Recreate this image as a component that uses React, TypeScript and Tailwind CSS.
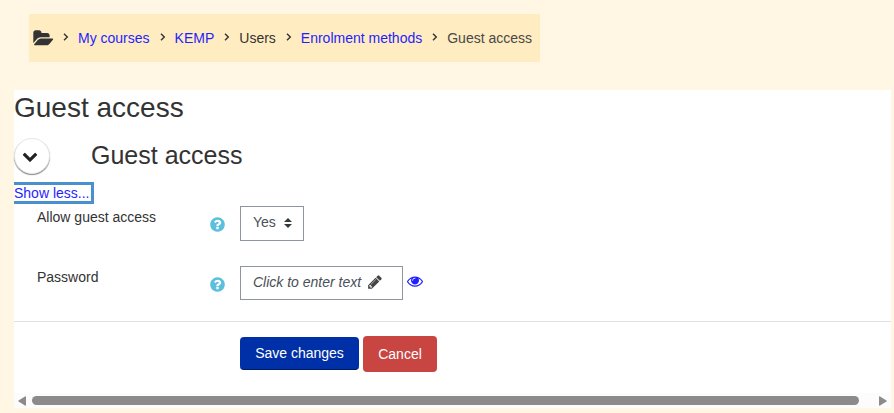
import { Fragment, type ReactNode } from "react";

const paths = {
  folderOpen:
    "M1815 952q0 31-31 66l-336 396q-43 51-120.5 86.5t-143.5 35.5h-1088q-34 0-60.5-13t-26.5-43q0-31 31-66l336-396q43-51 120.5-86.5t143.5-35.5h1088q34 0 60.5 13t26.5 43zm-343-344v160h-832q-94 0-197 47.5t-164 119.5l-337 396-5 6q0-4-.5-12.5t-.5-12.5v-960q0-92 66-158t158-66h320q92 0 158 66t66 158v32h544q92 0 158 66t66 158z",
  eye: "M1664 960q-152-236-381-353 61 104 61 225 0 185-131.5 316.5t-316.5 131.5-316.5-131.5-131.5-316.5q0-121 61-225-229 117-381 353 133 205 333.5 326.5t434.5 121.5 434.5-121.5 333.5-326.5zm-720-384q0-20-14-34t-34-14q-125 0-214.5 89.5t-89.5 214.5q0 20 14 34t34 14 34-14 14-34q0-86 61-147t147-61q20 0 34-14t14-34zm848 384q0 34-20 69-140 230-376.5 368.5t-499.5 138.5-499.5-139-376.5-368q-20-35-20-69t20-69q140-229 376.5-368t499.5-139 499.5 139 376.5 368q20 35 20 69z",
  pencil:
    "M491 1536l91-91-235-235-91 91v107h128v128h107zm523-928q0-22-22-22-10 0-17 7l-542 542q-7 7-7 17 0 22 22 22 10 0 17-7l542-542q7-7 7-17zm-54-192l416 416-832 832h-416v-416zm683 96q0 53-37 90l-166 166-416-416 166-165q36-38 90-38 53 0 91 38l235 234q37 39 37 91z",
  question:
    "M1024 1376v-192q0-14-9-23t-23-9h-192q-14 0-23 9t-9 23v192q0 14 9 23t23 9h192q14 0 23-9t9-23zm256-672q0-88-55.5-163t-138.5-116-170-41q-243 0-371 213-15 24 8 42l132 100q7 6 19 6 16 0 25-12 53-68 86-92 34-24 86-24 48 0 85.5 26t37.5 59q0 38-20 61t-68 45q-63 28-115.5 86.5t-52.5 125.5v36q0 14 9 23t23 9h192q14 0 23-9t9-23q0-19 21.5-49.5t54.5-49.5q32-18 49-28.5t46-35 44.5-48 28-60.5 12.5-81zm384 192q0 209-103 385.5t-279.5 279.5-385.5 103-385.5-103-279.5-279.5-103-385.5 103-385.5 279.5-279.5 385.5-103 385.5 103 279.5 279.5 103 385.5z",
  chevronDown:
    "M1683 808l-742 741q-19 19-45 19t-45-19l-742-741q-19-19-19-45.5t19-45.5l166-165q19-19 45-19t45 19l531 531 531-531q19-19 45-19t45 19l166 165q19 19 19 45.5t-19 45.5z",
};

const Icon = ({ name, className }: { name: keyof typeof paths; className: string }) => (
  <svg viewBox="0 0 1792 1792" fill="currentColor" overflow="visible" aria-hidden="true" className={className}>
    <path d={paths[name]} />
  </svg>
);

const crumbs = [
  { label: "My courses", link: true },
  { label: "KEMP", link: true },
  { label: "Users", link: false },
  { label: "Enrolment methods", link: true },
];

const Separator = () => (
  <svg viewBox="0 0 6 8" fill="none" stroke="#333" strokeWidth="1.4" aria-hidden="true" className="mb-0.5 ml-2.5 mr-[9px] h-2 w-1.5 shrink-0">
    <path d="M1 .8 4.3 4 1 7.2" />
  </svg>
);

const Breadcrumb = () => (
  <nav aria-label="Breadcrumb" className="ml-[15px] flex h-12 w-fit items-center whitespace-nowrap bg-[#ffecc0] pl-[5px] pr-2">
    <Icon name="folderOpen" className="h-[19px] w-[19px]" />
    {crumbs.map((crumb) => (
      <Fragment key={crumb.label}>
        <Separator />
        {crumb.link ? (
          <a href="#" className="text-[#1f1fff]">{crumb.label}</a>
        ) : (
          <span>{crumb.label}</span>
        )}
      </Fragment>
    ))}
    <Separator />
    <span className="text-[#484848]">Guest access</span>
  </nav>
);

const FormRow = ({ id, label, children }: { id: string; label: string; children: ReactNode }) => (
  <div className="flex h-[60px] items-start">
    <div className="flex w-[226px] shrink-0 items-start justify-between pl-[23px] pr-[14px]">
      <label htmlFor={id} className="pt-px">{label}</label>
      <button type="button" aria-label={`Help with ${label}`} className="mt-2.5 text-[#5bc0de]">
        <Icon name="question" className="h-[17px] w-[17px]" />
      </button>
    </div>
    {children}
  </div>
);

const ScrollBar = () => (
  <div className="flex h-[15px] items-center bg-[#fcfcfc] px-1 text-[#8b8b8b]">
    <svg viewBox="0 0 8 10" fill="currentColor" aria-hidden="true" className="h-2.5 w-2 shrink-0">
      <path d="M8 1v8q0 1-1 .5L.5 5.500q-.5-.5 0-1L7 .5Q8 0 8 1z" />
    </svg>
    <div className="ml-1.5 mr-5 h-[9px] grow rounded-full bg-[#8b8b8b]" />
    <svg viewBox="0 0 8 10" fill="currentColor" aria-hidden="true" className="h-2.5 w-2 shrink-0">
      <path d="M0 1v8q0 1 1 .5L7.500 5.500q.5-.5 0-1L1 .5Q0 0 0 1z" />
    </svg>
  </div>
);

const App = () => {
  return (
    <div className="min-h-screen bg-[#fff6e3] pb-1.5 pl-[14px] pr-[3px] pt-[14px] font-['Liberation_Sans',Arial,sans-serif] text-[14px] leading-5 text-[#333]">
      <Breadcrumb />

      <main className="mt-7 bg-white">
        <h1 className="text-[28px] leading-9">Guest access</h1>

        <form onSubmit={(e) => e.preventDefault()}>
          <div className="mt-3 flex items-start">
            <button
              type="button"
              aria-label="Collapse Guest access"
              className="flex h-9 w-9 items-center justify-center rounded-full border border-gray-200 bg-white pr-1 text-[#222] shadow-[0_1px_1px_#888]"
            >
              <Icon name="chevronDown" className="h-4 w-4" />
            </button>
            <h2 className="ml-[41px] text-[25px] leading-[34px]">Guest access</h2>
          </div>

          <a href="#" className="mt-2 block w-fit border-[3px] border-l-0 border-[#4a90cf] pr-0.5 leading-4 text-[#1f1fff]">
            Show less...
          </a>

          <div className="mt-0.5">
            <FormRow id="allow-guest" label="Allow guest access">
              <div className="relative">
                <select
                  id="allow-guest"
                  defaultValue="yes"
                  className="h-[35px] w-16 appearance-none border border-[#8f959e] bg-white pb-1 pl-3 text-[#495057]"
                >
                  <option value="yes">Yes</option>
                  <option value="no">No</option>
                </select>
                <svg viewBox="0 0 8 10" fill="#343a40" aria-hidden="true" className="pointer-events-none absolute right-3 top-3 h-2.5 w-2">
                  <path d="M4 0 8 4H0zM0 6h8L4 10z" />
                </svg>
              </div>
            </FormRow>

            <FormRow id="password" label="Password">
              <button
                id="password"
                type="button"
                className="flex h-[34px] w-[163px] items-center gap-1.5 whitespace-nowrap border border-[#8f959e] pb-0.5 pl-3 italic text-[#495057]"
              >
                Click to enter text
                <Icon name="pencil" className="h-4 w-4 text-[#444]" />
              </button>
              <button type="button" aria-label="Reveal" className="ml-1 mt-[7px] text-[#1f1fff]">
                <Icon name="eye" className="h-4 w-4" />
              </button>
            </FormRow>
          </div>

          <div className="mt-[-5px] flex items-start gap-1 border-t border-[#dee2e6] pb-[21px] pl-[226px] pt-[14px]">
            <button type="submit" className="mt-px h-[33px] w-[119px] rounded border-b border-[#001b66] bg-[#0030a8] text-white">
              Save changes
            </button>
            <button type="button" className="h-9 w-[74px] rounded bg-[#c84541] text-white">
              Cancel
            </button>
          </div>
        </form>

        <ScrollBar />
      </main>
    </div>
  );
};

export default App;
